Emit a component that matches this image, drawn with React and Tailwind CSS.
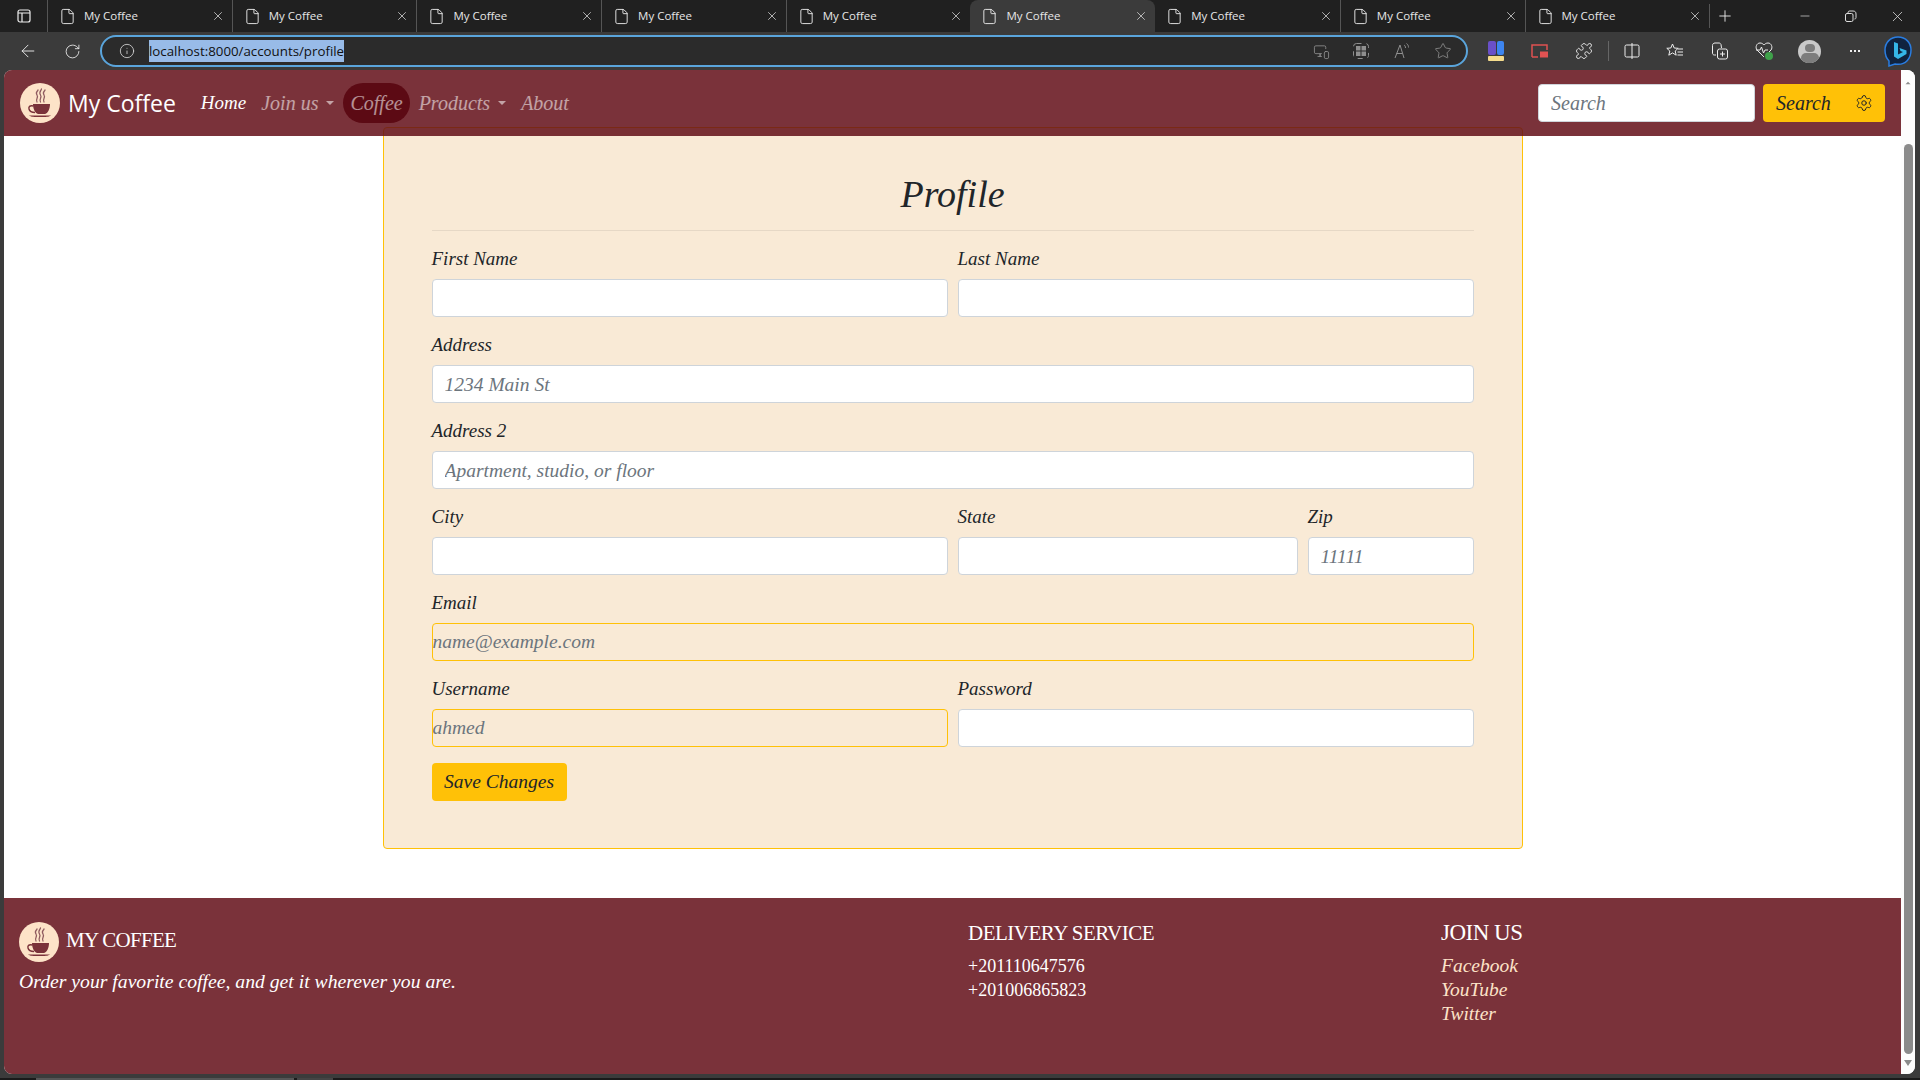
import { ArrowLeft, RotateCw, Info, File, X, Plus, Minus, Star, Puzzle, MonitorSmartphone, Settings, ChevronUp } from 'lucide-react';

const tabs = [0, 1, 2, 3, 4, 5, 6, 7, 8];

function CoffeeLogo() {
  return (
    <svg width="40" height="40" viewBox="0 0 40 40" className="shrink-0">
      <circle cx="20" cy="20" r="20" fill="#fde3c8" />
      <g fill="none" stroke="#8f5a5f" strokeWidth="1.3" strokeLinecap="round">
        <path d="M17 19c-2-3 2-4 0-7s1-4 1-5" />
        <path d="M20.5 19c-2-3 2-4 0-7s1-5 1-6" />
        <path d="M24 19c-2-3 2-4 0-7s1-4 1-5" />
      </g>
      <path d="M13 21h17c0 5-2 9-5 10h-7c-3-1-5-5-5-10z" fill="#7a323a" />
      <path d="M13.5 23c-4-1-5 1-4.5 3s3 3.500 6 3.500" fill="none" stroke="#7a323a" strokeWidth="1.400" />
      <path d="M9 32.500h22c-2 1.500-5 1.500-11 1.500s-9 0-11-1.500z" fill="#7a323a" />
    </svg>
  );
}

function Field({ label, width, placeholder, plain }) {
  return (
    <div className={width}>
      <label className="block h-6 mb-2 text-[19px] leading-6 text-[#212529]">{label}</label>
      {plain ? (
        <input
          readOnly
          placeholder={placeholder}
          className="block w-full h-[38px] bg-transparent border border-[#ffc107] rounded-[4px] text-[19.500px] outline-none placeholder:text-[#6c757d]"
        />
      ) : (
        <input
          placeholder={placeholder}
          className="block w-full h-[38px] bg-white border border-[#ced4da] rounded-[4px] px-3 pt-[2px] text-[19.500px] outline-none placeholder:text-[#6c757d]"
        />
      )}
    </div>
  );
}

function BrowserChrome() {
  return (
    <>
      <div className="flex h-8 bg-[#202020] text-[#e6e6e6] shrink-0 [font-family:'Open_Sans',sans-serif]">
        <div className="w-[47px] flex items-center justify-center">
          <svg width="16" height="16" viewBox="0 0 16 16" fill="none" stroke="#eee" strokeWidth="1.200">
            <rect x="2" y="2" width="12" height="12" rx="2" />
            <path d="M2 5h12M6 5v9" />
          </svg>
        </div>
        {tabs.map((tab) => (
          <div
            key={tab}
            className={`w-[184.700px] h-8 flex items-center pl-[11px] pr-[7px] ${
              tab === 5 ? 'bg-[#3b3b3b] rounded-t-[8px]' : tab === 6 ? '' : 'border-l border-[#555]'
            }`}
          >
            <File size={17} strokeWidth={1.300} className="text-[#eee] shrink-0" />
            <span className="ml-[8px] text-[11.500px] flex-1">My Coffee</span>
            <X size={14} strokeWidth={1.300} className="text-[#ddd]" />
          </div>
        ))}
        <div className="w-[31px] flex items-center justify-center border-l border-[#555] my-1">
          <Plus size={18} strokeWidth={1.200} className="text-[#eee]" />
        </div>
        <div className="flex items-center ml-[58px] text-[#ddd]">
          <Minus size={14} strokeWidth={1.200} />
          <svg width="13" height="13" viewBox="0 0 13 13" fill="none" stroke="#ddd" className="ml-[32px]">
            <rect x="1.500" y="3.500" width="7.500" height="8" rx="1.500" />
            <path d="M4 3c0-1.500.5-2 2-2h3c2 0 3 1 3 3v3.500c0 1-.5 1.500-1.500 1.500" />
          </svg>
          <X size={17} strokeWidth={1.100} className="ml-[32px]" />
        </div>
      </div>

      <div className="flex items-center h-[38px] bg-[#3b3b3b] shrink-0 [font-family:'Open_Sans',sans-serif]">
        <div className="w-[56px] flex justify-center">
          <ArrowLeft size={20} strokeWidth={1.100} className="text-[#eee]" />
        </div>
        <div className="w-[32px] flex justify-center">
          <RotateCw size={17} strokeWidth={1.200} className="text-[#eee]" />
        </div>
        <div className="ml-[12px] w-[1368px] h-[32px] rounded-full border-2 border-[#5aa5dc] bg-[#2b2b2b] flex items-center">
          <Info size={16} strokeWidth={1.200} className="ml-[17px] text-[#ddd]" />
          <span className="ml-[14px] h-[22px] leading-[22px] bg-[#98bbe8] text-[#111] text-[13.300px]">localhost:8000/accounts/profile</span>
          <div className="ml-auto flex items-center text-[#8f8f8f]">
            <MonitorSmartphone size={17} strokeWidth={1.200} className="mr-[23px]" />
            <svg width="16" height="16" viewBox="0 0 16 16" className="mr-[25px]">
              <rect x=".5" y=".5" width="15" height="15" rx="3" fill="none" stroke="#8f8f8f" strokeDasharray="5 5" />
              <rect x="3" y="3" width="4.500" height="4.500" fill="#8f8f8f" />
              <rect x="8.500" y="3" width="4.500" height="4.500" fill="#8f8f8f" />
              <rect x="3" y="8.500" width="4.500" height="4.500" fill="#8f8f8f" />
              <rect x="8.500" y="8.500" width="4.500" height="4.500" fill="#8f8f8f" />
            </svg>
            <svg width="16" height="18" viewBox="0 0 16 18" fill="none" stroke="#8f8f8f" className="mr-[24px]">
              <path d="M1 16L6 3l4 13M2.500 11.500h6" />
              <path d="M10 3c1 .5 1.500 1.500 1.500 3M12.500 1.500c1.500 1 2 2.500 2 4" />
            </svg>
            <Star size={18} strokeWidth={1.100} className="mr-[14px]" />
          </div>
        </div>

        <div className="ml-[20px] w-[16px] h-[20px] relative">
          <div className="flex gap-[1px] h-[14px]">
            <div className="w-[8px] bg-[#6a50c8] rounded-[2px]" />
            <div className="w-[8px] bg-[#3d85f0] rounded-[2px]" />
          </div>
          <div className="mt-[1px] h-[5px] bg-[#f6dc8c] rounded-[1px]" />
        </div>
        <svg width="17" height="14" viewBox="0 0 17 14" fill="none" className="ml-[27px]">
          <path d="M1 13V1h15v5" stroke="#e05252" strokeWidth="1.500" />
          <path d="M1 13h6" stroke="#e05252" strokeWidth="1.500" />
          <rect x="9" y="7.500" width="8" height="6" fill="#e05252" />
        </svg>
        <Puzzle size={18} strokeWidth={1.200} className="ml-[27px] text-[#eee]" />
        <div className="ml-[15px] w-px h-[20px] bg-[#666]" />
        <svg width="16" height="16" viewBox="0 0 16 16" fill="none" stroke="#eee" className="ml-[15px]">
          <rect x="1" y="2" width="14" height="12" rx="1.500" />
          <path d="M8 0v16" />
        </svg>
        <svg width="18" height="16" viewBox="0 0 18 16" fill="none" stroke="#eee" className="ml-[26px]">
          <path d="M6.500 1l1.700 4 4 .3-3 2.700 1 4.200-3.700-2.300-3.700 2.300 1-4.200-3-2.700 4-.3z" />
          <path d="M12 6h5M11.500 9h5.500M11.500 12h5.500" />
        </svg>
        <svg width="17" height="18" viewBox="0 0 17 18" fill="none" stroke="#eee" className="ml-[27px]">
          <path d="M5 13H3.500C2 13 1.500 12 1.500 11V3.500C1.500 2 2.500 1 4 1l4 0c1 0 1.500.5 2 1.500L10.500 6" />
          <rect x="6.500" y="7" width="10" height="10" rx="2" />
          <path d="M11.500 9.500v5M9 12h5" />
        </svg>
        <div className="ml-[27px] relative w-[18px] h-[18px]">
          <svg width="18" height="16" viewBox="0 0 18 16" fill="none" stroke="#eee">
            <path d="M9 15L2 8C0 5.500 1.500 1 5 1c2 0 3 1 4 2 1-1 2-2 4-2 3.500 0 5 4.500 3 7l-2 2" />
            <path d="M1 8h4l1.500-3 2 6 1.500-3h3" />
          </svg>
          <div className="absolute right-0 bottom-0 w-[8px] h-[8px] rounded-full bg-[#3fa14a]" />
        </div>
        <div className="ml-[25px] w-[23px] h-[23px] rounded-full bg-[#c9c9c9] overflow-hidden flex flex-col items-center">
          <div className="mt-[4px] w-[10px] h-[10px] rounded-full bg-[#7d7d7d]" />
          <div className="mt-[1px] w-[18px] h-[12px] rounded-full bg-[#7d7d7d]" />
        </div>
        <div className="ml-[29px] flex gap-[2px]">
          <div className="w-[2px] h-[2px] bg-[#eee]" />
          <div className="w-[2px] h-[2px] bg-[#eee]" />
          <div className="w-[2px] h-[2px] bg-[#eee]" />
        </div>
        <svg width="30" height="33" viewBox="0 0 30 33" fill="none" className="ml-[23px]">
          <path d="M15 2C7 2 2 8 2 15c0 6 3 10 4 11v5l6-2c11 2 16-6 16-14C28 8 23 2 15 2z" fill="#10233f" stroke="#2a7de1" strokeWidth="1.500" />
          <path d="M11 7l4 1.500v11l5-2.500-2.500-1-1-3 7 2.500v3.500L15 24l-4-2.500z" fill="#35b6e8" />
        </svg>
      </div>
    </>
  );
}

export default function App() {
  return (
    <div className="w-[1920px] h-[1080px] overflow-hidden flex flex-col bg-[#3b3b3b] [font-family:'Liberation_Serif',serif]">
      <BrowserChrome />

      <div className="flex-1 min-h-0 flex ml-1 mr-[5px] rounded-[8px] overflow-hidden bg-white">
        <div className="flex-1 min-w-0 flex flex-col italic">
          <nav className="relative z-10 h-[66px] shrink-0 flex items-center pl-4 pr-4 bg-[#630e18]/85">
            <CoffeeLogo />
            <span className="ml-2 text-[23px] text-white not-italic [font-family:'Open_Sans',sans-serif]">My Coffee</span>
            <a className="ml-[25px] text-[19px] text-white">Home</a>
            <a className="ml-[15px] text-[20px] text-white/55">Join us</a>
            <span className="ml-2 border-x-[4px] border-t-[4px] border-x-transparent border-t-white/55" />
            <a className="ml-[9px] h-10 px-[7px] rounded-[20px] bg-[#5c0a14] text-[20px] leading-10 text-white/55">Coffee</a>
            <a className="ml-[9px] text-[20px] text-white/55">Products</a>
            <span className="ml-2 border-x-[4px] border-t-[4px] border-x-transparent border-t-white/55" />
            <a className="ml-[15px] text-[20px] text-white/55">About</a>
            <input
              placeholder="Search"
              className="ml-auto w-[217px] h-[38px] bg-white border border-[#ced4da] rounded-[4px] px-3 text-[20px] outline-none placeholder:text-[#6c757d]"
            />
            <button className="ml-2 w-[122px] h-[38px] bg-[#ffc107] rounded-[4px] flex items-center pl-[13px] pr-[12px] text-[20px] text-[#212529]">
              Search
              <Settings size={18} strokeWidth={1.300} className="ml-auto" />
            </button>
          </nav>

          <main className="flex-1 min-h-0 flex flex-col items-center">
            <div className="w-[1140px] h-[722px] -mt-[9px] bg-[#f9ead6] border border-[#ffc107] rounded-[4px] px-12">
              <h1 className="h-[103px] pt-[41px] text-center text-[38px] leading-[50px] text-[#212529] border-b border-[#e6d8c6]">Profile</h1>
              <form className="mt-[16px] flex flex-col gap-4">
                <div className="flex gap-[10px]">
                  <Field label="First Name" width="w-[516px]" />
                  <Field label="Last Name" width="w-[516px]" />
                </div>
                <Field label="Address" placeholder="1234 Main St" />
                <Field label="Address 2" placeholder="Apartment, studio, or floor" />
                <div className="flex gap-[10px]">
                  <Field label="City" width="w-[516px]" />
                  <Field label="State" width="w-[340px]" />
                  <Field label="Zip" width="w-[166px]" placeholder="11111" />
                </div>
                <Field label="Email" placeholder="name@example.com" plain />
                <div className="flex gap-[10px]">
                  <Field label="Username" width="w-[516px]" placeholder="ahmed" plain />
                  <Field label="Password" width="w-[516px]" />
                </div>
                <button type="button" className="w-[135px] h-[38px] bg-[#ffc107] rounded-[4px] text-[19.500px] text-[#212529]">Save Changes</button>
              </form>
            </div>
          </main>

          <footer className="h-[176px] shrink-0 flex pl-[15px] bg-[#7a323a] text-white">
            <div className="w-[949px] pt-[24px]">
              <div className="flex items-center">
                <CoffeeLogo />
                <span className="ml-[7px] -mt-[3px] text-[21px] tracking-[-0.7px] not-italic">MY COFFEE</span>
              </div>
              <p className="mt-[7px] text-[19.700px] leading-6">Order your favorite coffee, and get it wherever you are.</p>
            </div>
            <div className="w-[473px] pt-[20px]">
              <h5 className="text-[21px] leading-[30px] tracking-[-0.5px] not-italic">DELIVERY SERVICE</h5>
              <p className="mt-[6px] text-[18px] leading-6 not-italic">+201110647576</p>
              <p className="text-[18px] leading-6 not-italic">+201006865823</p>
            </div>
            <div className="flex-1 pt-[20px]">
              <h5 className="text-[23px] leading-[30px] tracking-[-0.5px] not-italic">JOIN US</h5>
              <a className="block mt-[6px] text-[19.500px] leading-6 text-[#fde3c8]">Facebook</a>
              <a className="block text-[19.500px] leading-6 text-[#fde3c8]">YouTube</a>
              <a className="block text-[19.500px] leading-6 text-[#fde3c8]">Twitter</a>
            </div>
          </footer>
        </div>

        <div className="w-[14px] shrink-0 bg-[#fdfdfd] flex flex-col items-center pt-[8px] pb-[8px]">
          <ChevronUp size={10} strokeWidth={0} fill="#8b8b8b" />
          <div className="mt-[56px] w-[9px] flex-1 rounded-full bg-[#8b8b8b]" />
          <div className="mt-[6px] border-x-[4px] border-t-[6px] border-x-transparent border-t-[#8b8b8b]" />
        </div>
      </div>

      <div className="h-1 shrink-0" />
      <div className="h-[2px] shrink-0 flex bg-[#1a1a1a]">
        <div className="ml-[36px] w-[258px] bg-[#555]" />
        <div className="ml-[3px] w-[36px] bg-[#444]" />
      </div>
    </div>
  );
}
